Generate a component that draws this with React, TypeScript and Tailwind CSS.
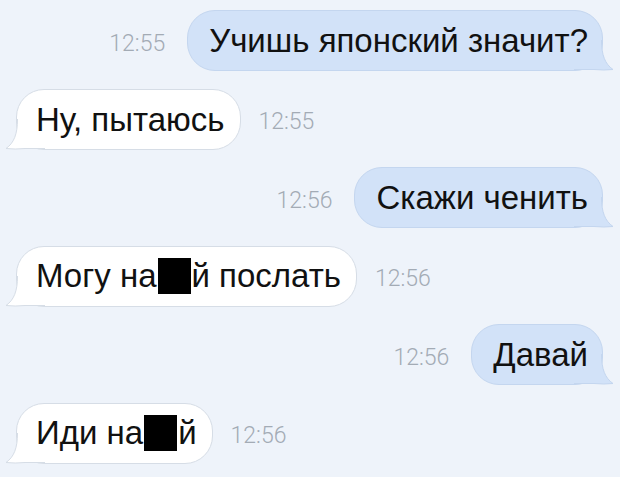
import { ReactNode } from "react";

interface Message {
  id: number;
  out: boolean;
  time: string;
  body: ReactNode;
}

// black censor block sitting inside a word
const Censor = () => (
  <span className="inline-block w-[33px] h-[36px] bg-black align-[-7px] mx-[1px]" />
);

const messages: Message[] = [
  { id: 1, out: true, time: "12:55", body: "Учишь японский значит?" },
  { id: 2, out: false, time: "12:55", body: "Ну, пытаюсь" },
  { id: 3, out: true, time: "12:56", body: "Скажи ченить" },
  {
    id: 4,
    out: false,
    time: "12:56",
    body: (
      <>
        Могу на
        <Censor />й послать
      </>
    ),
  },
  { id: 5, out: true, time: "12:56", body: "Давай" },
  {
    id: 6,
    out: false,
    time: "12:56",
    body: (
      <>
        Иди на
        <Censor />й
      </>
    ),
  },
];

function Tail({ out }: { out: boolean }) {
  const fill = out ? "#d2e2f8" : "#ffffff";
  const stroke = out ? "#c4d6ef" : "#d6dde6";
  return (
    <svg
      width="40"
      height="30"
      viewBox="0 0 40 30"
      className={
        out
          ? "absolute right-[-12px] bottom-0 overflow-visible"
          : "absolute left-[-12px] bottom-0 overflow-visible -scale-x-100"
      }
    >
      <path d="M0 29.5 L0 0 L27.5 0 C27.5 15 31 24 39 29.5 Q30 30.5 20 29.5 Z" fill={fill} />
      <path
        d="M27.5 0 C27.5 15 31 24 39 29.5 Q30 30.5 20 29.5 L0 29.5"
        fill="none"
        stroke={stroke}
        strokeWidth="1"
      />
    </svg>
  );
}

function Bubble({ msg }: { msg: Message }) {
  return (
    <div
      className={
        msg.out
          ? "relative h-[61px] flex items-center pl-[21px] pr-[14px] rounded-[28px] bg-[#d2e2f8] border border-[#c4d6ef]"
          : "relative h-[61px] flex items-center pl-[19px] pr-[15px] rounded-[28px] bg-white border border-[#d6dde6]"
      }
    >
      <span className="relative z-10 whitespace-nowrap text-[33px] leading-none text-[#111111] font-['Liberation_Sans',Arial,sans-serif]">
        {msg.body}
      </span>
      <Tail out={msg.out} />
    </div>
  );
}

function Time({ time }: { time: string }) {
  return (
    <span className="mt-[7px] text-[23px] font-light text-[#a3abb5] font-['Roboto','Liberation_Sans',sans-serif]">
      {time}
    </span>
  );
}

export default function App() {
  return (
    <div className="w-[620px] h-[477px] overflow-hidden bg-[#eef3fa] flex flex-col gap-[17.5px] pt-[10px]">
      {messages.map((m) =>
        m.out ? (
          <div key={m.id} className="flex items-center justify-end gap-[22px] pr-[17px]">
            <Time time={m.time} />
            <Bubble msg={m} />
          </div>
        ) : (
          <div key={m.id} className="flex items-center gap-[18px] pl-[16px]">
            <Bubble msg={m} />
            <Time time={m.time} />
          </div>
        )
      )}
    </div>
  );
}
